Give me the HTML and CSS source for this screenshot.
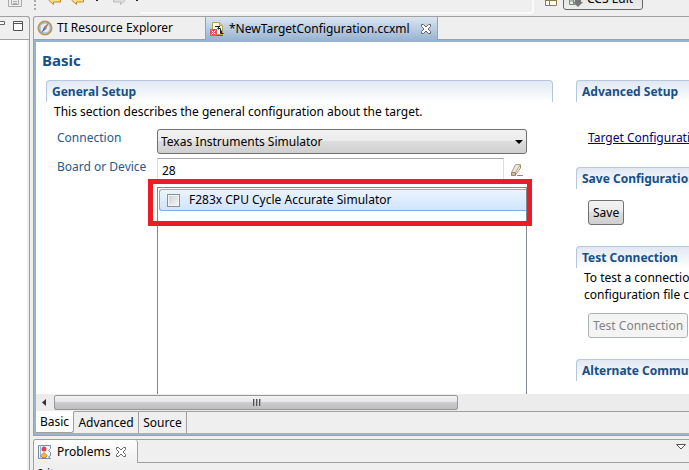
FILE: index.html
```
<!DOCTYPE html>
<html lang="en">
<head>
<meta charset="utf-8">
<title>Code Composer Studio</title>
<link rel="stylesheet" href="styles.css">
</head>
<body>
<header class="toolbar">
  <svg class="tool-grid" width="14" height="8" viewBox="0 0 14 8"><path d="M.5 0v6.500h13V0M3.500 0v4.500h7V0M5 1.500h4M5 3.500h4" fill="none" stroke="#a9a9a9"/></svg>
  <span class="grip"></span>
  <svg class="arrows" width="92" height="8" viewBox="0 0 92 8">
    <g fill="#ffdf82" stroke="#bd892c"><path d="M.5 0l5 4.500V2h7V0"/><path d="M23.500 0l5 4.500V2h7V0"/></g>
    <path d="M77.500 0l-5 4.500V2h-7V0" fill="#ddd" stroke="#bbb"/>
    <path d="M48 0h2v1h-2zM88 0h2v1h-2z" fill="#222"/>
  </svg>
  <span class="toolbar-end"></span>
  <svg class="perspective-icon" width="12" height="8" viewBox="0 0 12 8"><path d="M.5 0v5.500h11V0M.5 .5h11M4.500 0v5" fill="#fff" stroke="#8a7b52"/></svg>
  <button class="perspective" type="button">
    <svg width="16" height="16" viewBox="0 0 16 16"><path d="M1.500 3v10.500h6M1.500 10h5M5.500 8v5" fill="none" stroke="#789078"/><path d="M7 8h6v3h2l-5 5-5-5h2z" fill="#777"/></svg>CCS Edit
  </button>
</header>
<div class="workbench">
  <aside class="side">
    <div class="side-bar">
      <svg width="30" height="12" viewBox="0 0 30 12"><path d="M0 1.500h4.500v3H0" fill="#fff" stroke="#666"/><path d="M13.500 1.500h9v9h-9zM13.500 3.500h9" fill="#fff" stroke="#555"/></svg>
    </div>
    <div class="side-body"></div>
  </aside>
  <main class="main">
    <section class="editor">
      <nav class="tabs">
        <button class="tab" type="button">
          <svg width="16" height="16" viewBox="0 0 16 16"><circle cx="8" cy="8" r="6.500" fill="#e5edf8" stroke="#b39a5c" stroke-width="2"/><circle cx="8" cy="8" r="5" fill="none" stroke="#9eb6d8"/><path d="M11.500 3L9 9l-4.500 4L7 7z" fill="#668"/><path d="M11.500 3L7 7l2 2z" fill="#c97870"/></svg>
          TI Resource Explorer
        </button>
        <button class="tab tab-active" type="button">
          <svg width="16" height="16" viewBox="0 0 16 16"><path d="M3.500 1.500h7l3 3v9h-10z" fill="#fffbe4" stroke="#b9a057"/><path d="M10.500 1.500v3h3" fill="#e7d08b" stroke="#b9a057"/><path d="M6 5.500h5M9.500 5.500v3M8.500 7.500h3v5h3M12.500 9.500v3" fill="none" stroke="#222"/><path d="M8 14.500h6" stroke="#46599a"/><path d="M1 8h7v7H1z" fill="#dc5260"/><path d="M2.500 9.500l4 4m0-4l-4 4" stroke="#fff"/></svg>
          *NewTargetConfiguration.ccxml
          <svg class="close" width="12" height="12" viewBox="0 0 12 12"><path d="M1.500 1.500h2L6 4l2.500-2.500h2v2L8 6l2.500 2.500v2h-2L6 8l-2.500 2.500h-2v-2L4 6 1.500 3.500z" fill="#fff" stroke="#666"/></svg>
        </button>
      </nav>
      <div class="editor-frame">
        <div class="form">
          <h1>Basic</h1>
          <div class="columns">
            <section class="setup">
              <h2>General Setup</h2>
              <p>This section describes the general configuration about the target.</p>
              <div class="fields">
                <label for="connection">Connection</label>
                <div class="select-wrap">
                  <select id="connection"><option>Texas Instruments Simulator</option></select>
                  <svg class="caret" width="8" height="4" viewBox="0 0 8 4"><path d="M0 0h8L4 4z"/></svg>
                </div>
                <label for="device">Board or Device</label>
                <div class="device-row">
                  <input id="device" type="text" value="28">
                  <svg width="14" height="13" viewBox="0 0 14 13"><path d="M5.500.5h5l-5 8v3h-4v-3z" fill="#eee4d8" stroke="#b5a08a"/><path d="M1.500 8.500h4v3h-4z" fill="#cdbba6" stroke="#a28a72"/><path d="M10.500 1v3l-5 7M7 11.500h6" fill="none" stroke="#a28a72"/></svg>
                </div>
                <div class="list">
                  <label class="item"><input type="checkbox"><span>F283x CPU Cycle Accurate Simulator</span></label>
                  <div class="highlight"></div>
                </div>
              </div>
            </section>
            <div class="actions">
              <section class="advanced"><h2>Advanced Setup</h2><a href="#">Target Configuration</a></section>
              <section class="save"><h2>Save Configuration</h2><button class="push" type="button">Save</button></section>
              <section class="test"><h2>Test Connection</h2><p>To test a connection,<br>configuration file contents</p><button class="push" type="button" disabled>Test Connection</button></section>
              <section><h2>Alternate Communication</h2></section>
            </div>
          </div>
        </div>
        <div class="scrollbar">
          <svg class="scroll-arrow" width="4" height="7" viewBox="0 0 4 7"><path d="M4 0v7L0 3.500z" fill="#333"/></svg>
          <div class="thumb"><svg width="9" height="7" viewBox="0 0 9 7"><path d="M1.500 0v7M4.500 0v7M7.500 0v7" stroke="#555"/><path d="M2.500 0v7M5.500 0v7M8.500 0v7" stroke="#aaa"/></svg></div>
        </div>
        <nav class="pages">
          <button class="page page-active" type="button">Basic</button><button class="page" type="button">Advanced</button><button class="page" type="button">Source</button>
        </nav>
      </div>
    </section>
    <section class="problems">
      <div class="problem-bar">
        <button class="problem-tab" type="button">
          <svg width="14" height="16" viewBox="0 0 14 16"><path d="M.5 1.500h12v3l-2 2 2 2v3l-2 1.500 2 1.500H.5z" fill="#f2f6ff" stroke="#7489ad"/><path d="M2.500 1v14" stroke="#9fb2d2"/><circle cx="6" cy="5" r="2.500" fill="#d9434d"/><path d="M6 8.500l3 3-1 2H4l-1-2z" fill="#f6b73c" stroke="#c58a24"/></svg>
          Problems
          <svg class="close" width="12" height="12" viewBox="0 0 12 12"><path d="M1.500 1.500h2L6 4l2.500-2.500h2v2L8 6l2.500 2.500v2h-2L6 8l-2.500 2.500h-2v-2L4 6 1.500 3.500z" fill="#fff" stroke="#666"/></svg>
        </button>
        <svg class="view-menu" width="10" height="6" viewBox="0 0 10 6"><path d="M.5.500h9L5 5z" fill="#fff" stroke="#555"/></svg>
      </div>
      <div class="problem-body">0 items</div>
    </section>
  </main>
</div>
</body>
</html>
```
FILE: styles.css
```
* { box-sizing: border-box; }
body {
  margin: 0;
  height: 100vh;
  display: flex;
  flex-direction: column;
  overflow: hidden;
  background: #efefef;
  color: #000;
  font: 12px/16px "Noto Sans", "Open Sans", sans-serif;
  white-space: nowrap;
}
button, input, select { font: inherit; color: inherit; margin: 0; }
button { background: none; border: 0; padding: 0; }
svg { display: block; flex: none; }
h1, h2, p { margin: 0; }
.toolbar { flex: none; display: flex; height: 16px; overflow: hidden; }
.tool-grid { margin-left: 8px; }
.grip { width: 2px; margin: 0 12px; height: 10px; background: repeating-linear-gradient(#aaa 0 2px, transparent 2px 4px); }
.toolbar-end { flex: 1; height: 14px; border: solid #fafafa; border-width: 0 2px 2px 0; border-radius: 0 0 4px 0; margin-right: 11px; }
.perspective-icon { margin-right: 6px; }
.perspective {
  display: flex; align-items: center; gap: 3px; width: 80px; height: 22px; margin: -12px 46px 0 0; padding: 0 0 0 4px;
  border: 1px solid #666; border-radius: 3px; background: linear-gradient(#ddd, #eee);
}
.workbench { flex: 1; min-height: 0; display: flex; gap: 3px; }
.side { width: 30px; display: flex; flex-direction: column; border: solid #a0a0a0; border-width: 1px 1px 0 0; border-radius: 0 3px 0 0; }
.side-bar { height: 23px; padding-top: 3px; border-bottom: 1px solid #a0a0a0; overflow: hidden; }
.side-body { flex: 1; margin-right: 2px; background: #fff; }
.main { flex: 1; min-width: 0; display: flex; flex-direction: column; gap: 3px; }
.editor { flex: 1; min-height: 0; display: flex; flex-direction: column; border: solid #a0a0a0; border-width: 1px 0 1px 1px; border-radius: 3px 0 0 0; }
.tabs { flex: none; display: flex; height: 23px; border-bottom: 1px solid #a0a0a0; }
.tab { display: flex; align-items: center; gap: 4px; padding: 0 5px 0 3px; height: 22px; border-right: 1px solid #a0a0a0; width: 172px; }
.tab-active { width: 232px; height: 23px; background: linear-gradient(#dce6f1, #99b4d1); }
.tab-active .close { margin-left: auto; }
.editor-frame { flex: 1; min-height: 0; display: flex; flex-direction: column; border: solid #99b4d1; border-width: 2px 0 2px 2px; }
.form { flex: 1; min-height: 0; display: flex; flex-direction: column; padding: 8px 0 0 10px; background: #fff; overflow: hidden; }
h1 { margin-left: -4px; font-size: 15px; line-height: 20px; color: #174f86; }
.columns { flex: 1; min-height: 0; display: grid; grid-template-columns: minmax(0, 1fr) 113px; gap: 23px; margin-top: 10px; }
.setup { display: flex; flex-direction: column; min-height: 0; }
h2 { height: 22px; padding: 0 5px; border: 1px solid #b4c7dc; border-bottom: 0; border-radius: 4px 4px 0 0; background: linear-gradient(#e1e8f3, #fff); font-size: 12px; line-height: 21px; color: #174f86; }
.setup p { margin: 2px 8px 9px; }
.fields { flex: 1; min-height: 0; display: grid; grid-template-columns: 97px minmax(0, 1fr); grid-template-rows: 25px 25px 1fr; column-gap: 3px; row-gap: 4px; padding: 0 26px 0 11px; }
.fields > label { color: #285a8c; line-height: 18px; }
.select-wrap { display: grid; align-items: center; }
.select-wrap > * { grid-area: 1 / 1; }
select { appearance: none; width: 100%; height: 25px; padding: 0 3px; border: 1px solid #707070; border-radius: 3px; background: linear-gradient(#f2f2f2, #ebebeb 48%, #ddd 50%, #cfcfcf); }
.caret { justify-self: end; margin-right: 4px; }
.device-row { display: flex; align-items: center; gap: 6px; }
.device-row input { flex: 1; min-width: 0; height: 25px; padding: 0 4px; border: 1px solid #ddd; border-top-color: #a5a8ad; }
.device-row svg { margin-right: 3px; }
.list { grid-column: 2; position: relative; border: 1px solid #828790; border-bottom: 0; }
.item { display: flex; align-items: center; height: 22px; margin: 1px 0 0 1px; padding-left: 7px; gap: 9px; border: 1px solid #84acdd; border-right: 0; border-radius: 3px 0 0 3px; background: linear-gradient(#ebf4fe, #cfe4fe); }
.item input { appearance: none; width: 13px; height: 13px; border: 1px solid #8e8f8f; background: linear-gradient(135deg, #cbcfd5, #f6f6f6); box-shadow: inset 0 0 0 1px #f4f4f4; }
.highlight { position: absolute; inset: -9px -6px auto -10px; height: 47px; border: 5px solid #ed1c24; pointer-events: none; }
.actions { min-width: 0; overflow: hidden; }
.actions section { display: flex; flex-direction: column; align-items: flex-start; }
.actions h2 { width: 100%; overflow: hidden; border-right: 0; border-top-right-radius: 0; }
.actions a { margin: 28px 12px 21px; color: #000080; }
.push { height: 25px; margin: 0 12px; padding: 0 4px; border: 1px solid #707070; border-radius: 3px; background: linear-gradient(#f2f2f2, #ebebeb 48%, #ddd 50%, #cfcfcf); }
.push:disabled { border-color: #adb2b5; background: #f4f4f4; color: #838383; }
.save .push { margin-top: 11px; margin-bottom: 21px; }
.test p { margin: 1px 8px 10px; line-height: 17px; }
.test .push { margin-bottom: 21px; }
.scrollbar { flex: none; display: flex; align-items: center; height: 17px; padding-left: 6px; background: #ececec; }
.thumb { display: flex; align-items: center; justify-content: center; width: 62.5%; height: 15px; margin-left: 8px; border: 1px solid #979797; border-radius: 2px; background: linear-gradient(#f4f4f4, #e6e6e6 45%, #cdcdcf 50%, #bdbdc0); }
.pages { flex: none; display: flex; height: 22px; }
.page { width: 65px; border: solid #a0a0a0; border-width: 1px 1px 0 0; }
.page:last-child { width: 48px; }
.page-active { width: 38px; background: #fff; border-top-color: #fff; border-bottom: 1px solid #a0a0a0; border-radius: 0 0 3px 0; }
.pages::after { content: ""; flex: 1; border-top: 1px solid #a0a0a0; }
.problems { flex: none; height: 31px; border: solid #a0a0a0; border-width: 1px 0 0 1px; border-radius: 3px 0 0 0; overflow: hidden; }
.problem-bar { display: flex; justify-content: space-between; height: 23px; border-bottom: 1px solid #a0a0a0; }
.problem-tab { display: flex; align-items: center; gap: 5px; width: 104px; height: 23px; padding-left: 4px; border-right: 1px solid #a0a0a0; border-radius: 0 3px 0 0; background: linear-gradient(#fff, #efefef); }
.view-menu { margin: 4px 3px; }
.problem-body { padding: 3px 3px 0; }
```
